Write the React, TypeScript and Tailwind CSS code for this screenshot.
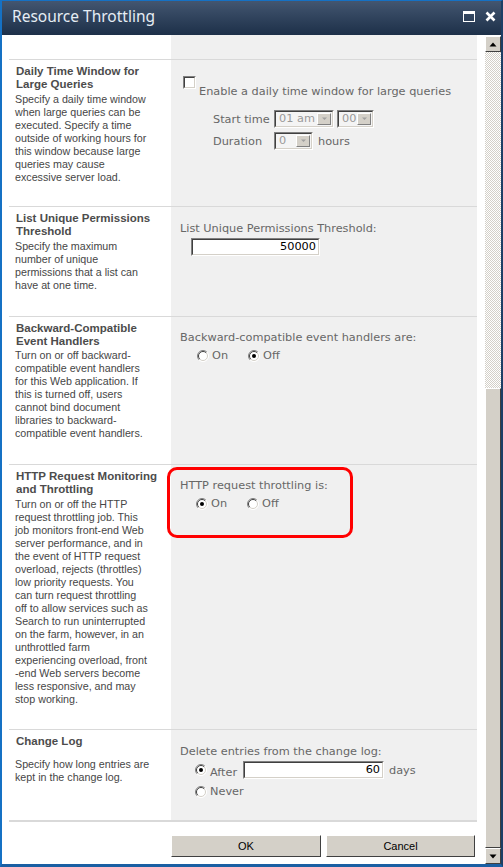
import React from "react";

const rightFont = { fontFamily: '"DejaVu Sans", Verdana, sans-serif' };

function Radio({ checked }: { checked?: boolean }) {
  return (
    <svg width="12" height="12" viewBox="0 0 12 12" className="shrink-0">
      <circle cx="6" cy="6" r="5.5" fill="#fff" />
      <path d="M9.9 2.1 A5.5 5.5 0 0 0 2.1 9.9" stroke="#808080" fill="none" />
      <path d="M9.2 2.8 A4.5 4.5 0 0 0 2.8 9.2" stroke="#404040" fill="none" />
      <path d="M9.9 2.1 A5.5 5.5 0 0 1 2.1 9.9" stroke="#ffffff" fill="none" />
      <path d="M9.2 2.8 A4.5 4.5 0 0 1 2.8 9.2" stroke="#d4d0c8" fill="none" />
      {checked && <circle cx="6" cy="6" r="2" fill="#000" />}
    </svg>
  );
}

function Checkbox() {
  return (
    <div className="w-[13px] h-[13px] shrink-0 border border-t-[#808080] border-l-[#808080] border-r-white border-b-white">
      <div className="w-full h-full bg-white border border-t-[#404040] border-l-[#404040] border-r-[#d4d0c8] border-b-[#d4d0c8]" />
    </div>
  );
}

function Select({ value, width }: { value: string; width: string }) {
  return (
    <div
      className={`${width} h-[18px] flex items-stretch bg-[#f4f4f4] border border-t-[#808080] border-l-[#808080] border-r-white border-b-white`}
    >
      <div className="flex-1 flex items-stretch border border-t-[#404040] border-l-[#404040] border-r-[#d4d0c8] border-b-[#d4d0c8]">
        <span className="flex-1 pl-[3px] text-[11.3px] leading-[14px] text-[#9a9a9a]">{value}</span>
        <div className="w-[14px] m-px bg-[#d4d0c8] border border-t-white border-l-white border-r-[#808080] border-b-[#808080] flex items-center justify-center">
          <svg width="7" height="4" viewBox="0 0 7 4">
            <path d="M1 0.5h5L3.5 3z" fill="#a0a0a0" />
          </svg>
        </div>
      </div>
    </div>
  );
}

function TextBox({ value, width }: { value: string; width: string }) {
  return (
    <div className={`${width} h-[18px] border border-t-[#808080] border-l-[#808080] border-r-white border-b-white`}>
      <div className="w-full h-full bg-white border border-t-[#404040] border-l-[#404040] border-r-[#d4d0c8] border-b-[#d4d0c8] text-right pr-[2px] text-[11.3px] leading-[14px] text-black">
        {value}
      </div>
    </div>
  );
}

function Sep({ thick }: { thick?: boolean }) {
  return (
    <div className={`flex ${thick ? "h-[2px]" : "h-px"}`}>
      <div className="w-[7px] bg-white" />
      <div className="w-[468px] bg-[#d9d9d9]" />
      <div className="flex-1 bg-white" />
    </div>
  );
}

function Row({
  height,
  left,
  right,
}: {
  height: string;
  left: React.ReactNode;
  right: React.ReactNode;
}) {
  return (
    <div className={`flex ${height}`}>
      <div className="w-[169px] bg-white pl-[14px] pt-[5px]">{left}</div>
      <div className="w-[306px] bg-[#f0f0f0] relative text-[11.3px] leading-[13px] text-[#676767]" style={rightFont}>
        {right}
      </div>
      <div className="flex-1 bg-white" />
    </div>
  );
}

function Left({ title, lines, gap }: { title: string[]; lines: string[]; gap?: string }) {
  return (
    <div style={{ fontFamily: '"Liberation Sans", Arial, sans-serif' }}>
      <div className="text-[11.5px] leading-[13px] font-bold text-[#4c4c4c]">
        {title.map((t) => (
          <div key={t}>{t}</div>
        ))}
      </div>
      <div className={`${gap ?? "mt-[2px]"} -ml-px text-[10.7px] leading-[13px] text-[#464646]`}>
        {lines.map((t) => (
          <div key={t}>{t}</div>
        ))}
      </div>
    </div>
  );
}

function ScrollBtn({ down }: { down?: boolean }) {
  return (
    <div className="h-[16px] bg-[#d4d0c8] border border-t-white border-l-white border-r-[#404040] border-b-[#404040] flex items-center justify-center">
      <svg width="8" height="5" viewBox="0 0 8 5">
        {down ? <path d="M0.5 0.5h7L4 4.5z" fill="#000" /> : <path d="M0.5 4.5h7L4 0.5z" fill="#000" />}
      </svg>
    </div>
  );
}

function Button({ label, width }: { label: string; width: string }) {
  return (
    <div className={`${width} h-[22px] bg-[#d4d0c8] border border-t-white border-l-white border-r-[#404040] border-b-[#404040] flex items-center justify-center text-[11px] text-black`}>
      {label}
    </div>
  );
}

export default function App() {
  return (
    <div className="w-[503px] h-[867px] flex flex-col bg-white border-l-2 border-t border-b-[3px] border-r-2 border-l-[#1571c4] border-t-[#1571c4] border-b-[#1a5fa3] border-r-[#1c3f66]">
      <div className="h-[34px] shrink-0 bg-gradient-to-b from-[#435670] to-[#1d3049] flex items-center pl-[10px] pr-[5px]">
        <span className="text-[15.5px] text-[#e6edf4] -mt-[2px]" style={{ fontFamily: '"Noto Sans", "Open Sans", sans-serif' }}>
          Resource Throttling
        </span>
        <div className="ml-auto flex items-center gap-[10px] -mt-[3px]">
          <div className="w-[12px] h-[11px] border border-t-[3px] border-white" />
          <svg width="11" height="11" viewBox="0 0 11 11">
            <path d="M1.5 1.5l8 8M9.5 1.5l-8 8" stroke="#fff" strokeWidth="2.6" />
          </svg>
        </div>
      </div>
      <div className="flex flex-1 min-h-0">
        <div className="w-[483px] flex flex-col">
          <Row height="h-[24px]" left={null} right={null} />
          <Sep />
          <Row
            height="h-[146px]"
            left={
              <Left
                title={["Daily Time Window for", "Large Queries"]}
                lines={[
                  "Specify a daily time window",
                  "when large queries can be",
                  "executed. Specify a time",
                  "outside of working hours for",
                  "this window because large",
                  "queries may cause",
                  "excessive server load.",
                ]}
              />
            }
            right={
              <div className="pt-[16px] pl-[12px]">
                <div className="flex items-start">
                  <Checkbox />
                  <span className="ml-[3px] mt-[9px]">Enable a daily time window for large queries</span>
                </div>
                <div className="flex items-center mt-[12px] pl-[30px]">
                  <span className="w-[61px]">Start time</span>
                  <Select value="01 am" width="w-[60px]" />
                  <div className="w-[3px]" />
                  <Select value="00" width="w-[37px]" />
                </div>
                <div className="flex items-center mt-[4px] pl-[30px]">
                  <span className="w-[61px]">Duration</span>
                  <Select value="0" width="w-[39px]" />
                  <span className="ml-[5px]">hours</span>
                </div>
              </div>
            }
          />
          <Sep />
          <Row
            height="h-[109px]"
            left={
              <Left
                title={["List Unique Permissions", "Threshold"]}
                lines={["Specify the maximum", "number of unique", "permissions that a list can", "have at one time."]}
              />
            }
            right={
              <div className="pt-[15px] pl-[9px]">
                <div>List Unique Permissions Threshold:</div>
                <div className="mt-[3px] pl-[11px]">
                  <TextBox value="50000" width="w-[129px]" />
                </div>
              </div>
            }
          />
          <Sep />
          <Row
            height="h-[147px]"
            left={
              <Left
                title={["Backward-Compatible", "Event Handlers"]}
                lines={[
                  "Turn on or off backward-",
                  "compatible event handlers",
                  "for this Web application. If",
                  "this is turned off, users",
                  "cannot bind document",
                  "libraries to backward-",
                  "compatible event handlers.",
                ]}
                gap="mt-[1px]"
              />
            }
            right={
              <div className="pt-[14px] pl-[9px]">
                <div>Backward-compatible event handlers are:</div>
                <div className="flex items-center mt-[5px] pl-[17px] leading-[14px]">
                  <Radio />
                  <span className="ml-[3px] w-[36px]">On</span>
                  <Radio checked />
                  <span className="ml-[3px]">Off</span>
                </div>
              </div>
            }
          />
          <Sep />
          <Row
            height="h-[264px]"
            left={
              <Left
                title={["HTTP Request Monitoring", "and Throttling"]}
                lines={[
                  "Turn on or off the HTTP",
                  "request throttling job. This",
                  "job monitors front-end Web",
                  "server performance, and in",
                  "the event of HTTP request",
                  "overload, rejects (throttles)",
                  "low priority requests. You",
                  "can turn request throttling",
                  "off to allow services such as",
                  "Search to run uninterrupted",
                  "on the farm, however, in an",
                  "unthrottled farm",
                  "experiencing overload, front",
                  "-end Web servers become",
                  "less responsive, and may",
                  "stop working.",
                ]}
              />
            }
            right={
              <>
                <div className="pt-[14px] pl-[9px]">
                  <div>HTTP request throttling is:</div>
                  <div className="flex items-center mt-[5px] pl-[16px] leading-[14px]">
                    <Radio checked />
                    <span className="ml-[3px] w-[36px]">On</span>
                    <Radio />
                    <span className="ml-[3px]">Off</span>
                  </div>
                </div>
                <div className="absolute left-[-4px] top-[2px] w-[186px] h-[71px] border-[3.5px] border-[#ff0000] rounded-[10px]" />
              </>
            }
          />
          <Sep />
          <Row
            height="h-[90px]"
            left={
              <Left
                title={["Change Log"]}
                lines={["Specify how long entries are", "kept in the change log."]}
                gap="mt-[10px]"
              />
            }
            right={
              <div className="pt-[15px] pl-[9px]">
                <div>Delete entries from the change log:</div>
                <div className="flex items-center mt-[3px] pl-[15px]">
                  <Radio checked />
                  <span className="ml-[3px] w-[33px] pt-[4px]">After</span>
                  <TextBox value="60" width="w-[141px]" />
                  <span className="ml-[5px]">days</span>
                </div>
                <div className="flex items-center mt-[6px] pl-[15px]">
                  <Radio />
                  <span className="ml-[3px]">Never</span>
                </div>
              </div>
            }
          />
          <Sep thick />
          <div className="flex pt-[13px] pl-[169px] gap-[5px]" style={{ fontFamily: '"Liberation Sans", Arial, sans-serif' }}>
            <Button label="OK" width="w-[150px]" />
            <Button label="Cancel" width="w-[149px]" />
          </div>
        </div>
        <div className="w-[16px] flex flex-col pt-px">
          <ScrollBtn />
          <div className="h-[336px] bg-[repeating-conic-gradient(#d4d0c8_0_25%,#ffffff_0_50%)] bg-[length:2px_2px]" />
          <div className="flex-1 bg-[#d4d0c8] border border-t-white border-l-white border-r-[#404040] border-b-[#404040]" />
          <ScrollBtn down />
        </div>
      </div>
    </div>
  );
}
